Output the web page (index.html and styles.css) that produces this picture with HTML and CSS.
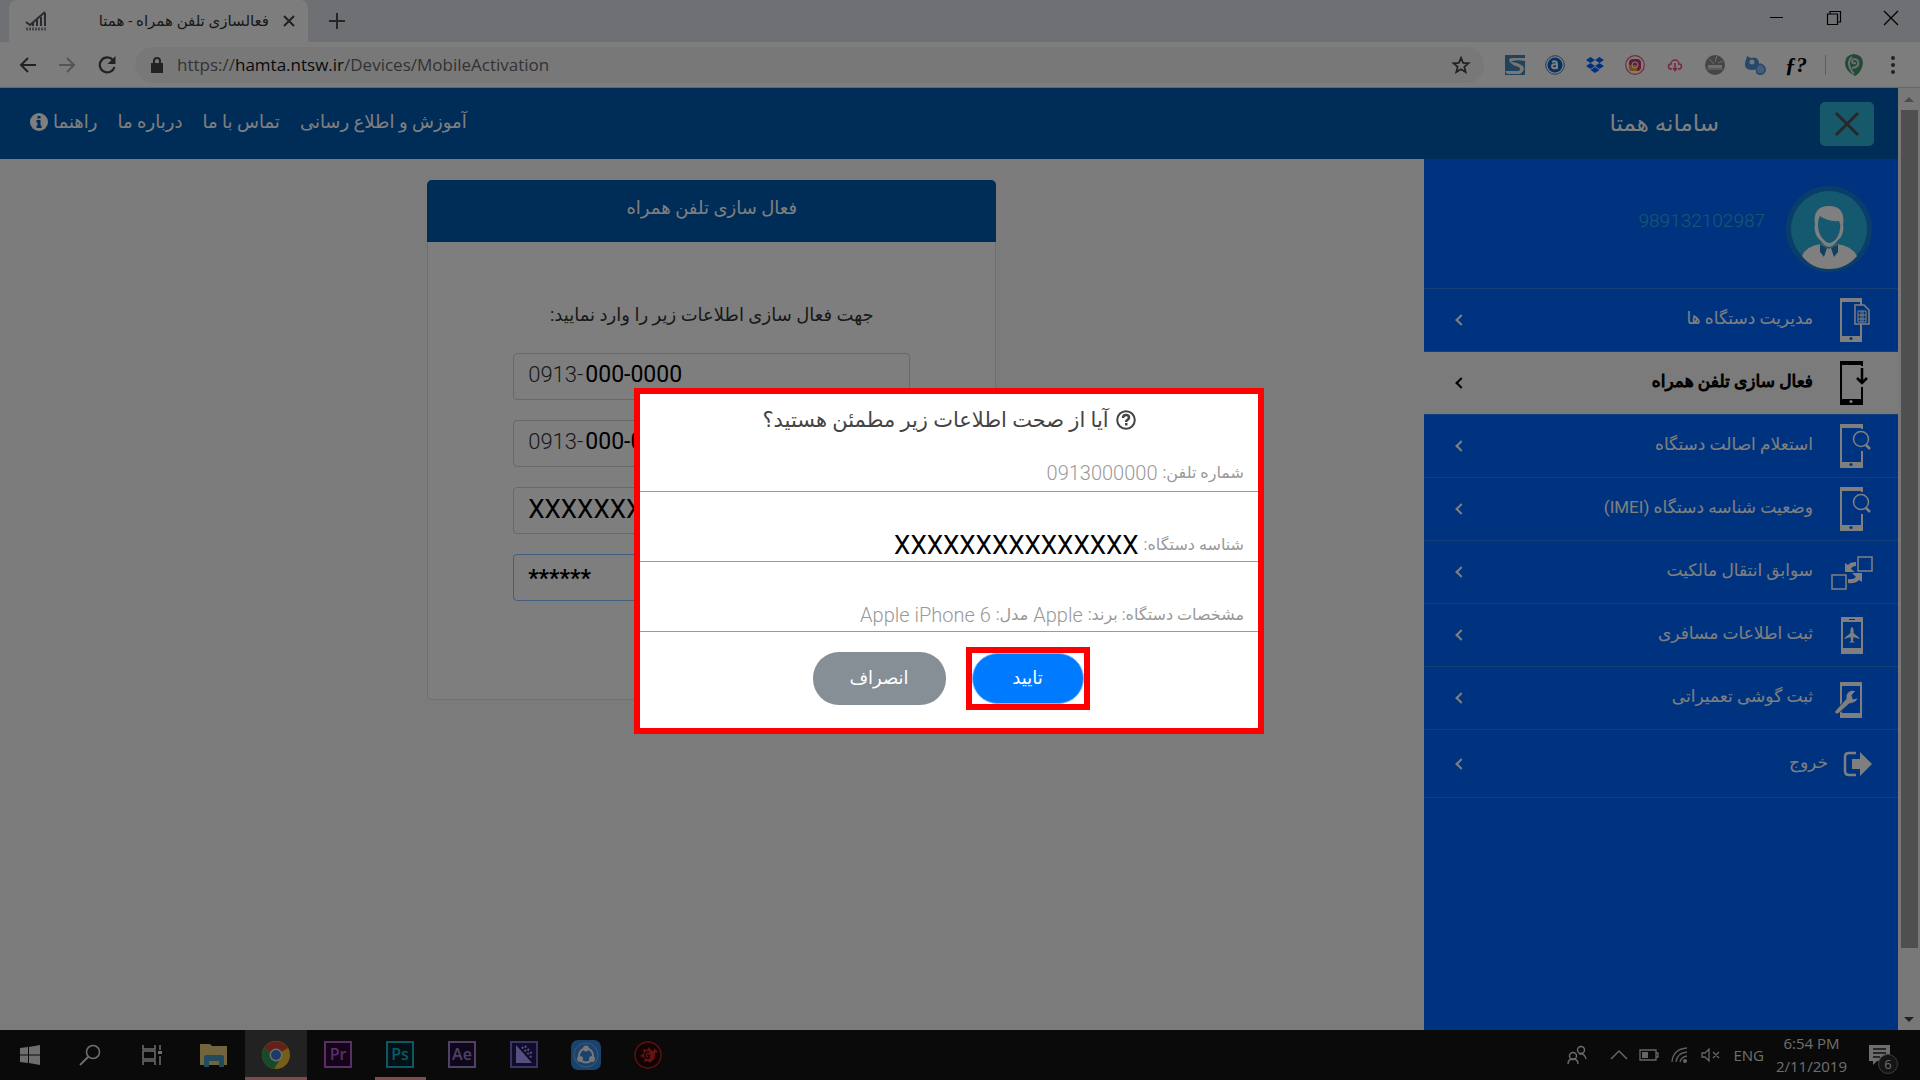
FILE: index.html
```html
<!DOCTYPE html>
<html lang="fa">
<head>
    <meta charset="UTF-8">
    <meta name="viewport" content="width=device-width, initial-scale=1.0">
    <title>فعالسازی تلفن همراه - همتا</title>
    <link rel="stylesheet" href="styles.css">
</head>
<body>
    <!-- Browser tabs -->
    <div class="tab-strip">
        <div class="tab">
            <svg class="tab-logo" width="22" height="20" viewBox="0 0 22 20"><path d="M1 11l4 3L20 1M8 12v3M12 9v6M16 6v9M20 2v13" fill="none" stroke="#556" stroke-width="2"/><path d="M1 18h20" stroke="#889" stroke-width="3" stroke-dasharray="2 1"/></svg>
            <span class="tab-title" dir="rtl">فعالسازی تلفن همراه - همتا</span>
            <button class="icon-btn" aria-label="Close tab"><svg width="12" height="12" viewBox="0 0 12 12"><path d="M1 1l10 10M11 1L1 11" stroke="#444" stroke-width="2"/></svg></button>
        </div>
        <button class="icon-btn" aria-label="New tab"><svg width="16" height="16" viewBox="0 0 16 16"><path d="M8 0v16M0 8h16" stroke="#4a4d51" stroke-width="2"/></svg></button>
        <div class="window-controls">
            <button class="icon-btn" aria-label="Minimize"><svg width="14" height="14" viewBox="0 0 14 14"><path d="M0 6.500h13" stroke="#000"/></svg></button>
            <button class="icon-btn" aria-label="Restore"><svg width="14" height="14" viewBox="0 0 14 14"><path d="M.5 3h10v10.500h-10zM3 3V.5h10.500V11H11" fill="none" stroke="#000" stroke-width="1.200"/></svg></button>
            <button class="icon-btn" aria-label="Close"><svg width="14" height="14" viewBox="0 0 14 14"><path d="M0 0l14 14M14 0L0 14" stroke="#000" stroke-width="1.300"/></svg></button>
        </div>
    </div>

    <!-- Address bar -->
    <div class="toolbar">
        <div class="toolbar-nav">
            <button class="icon-btn" aria-label="Back"><svg width="18" height="16" viewBox="0 0 18 16"><path d="M17 8H2M9 1L2 8l7 7" fill="none" stroke="#444" stroke-width="2"/></svg></button>
            <button class="icon-btn" aria-label="Forward"><svg width="18" height="16" viewBox="0 0 18 16"><path d="M1 8h15M9 1l7 7-7 7" fill="none" stroke="#aaa" stroke-width="2"/></svg></button>
            <button class="icon-btn" aria-label="Reload"><svg width="20" height="20" viewBox="0 0 20 20"><path d="M16 5a7.500 7.500 0 1 0 1.500 7" fill="none" stroke="#444" stroke-width="2.200"/><path d="M18.500 1v8h-8z" fill="#444"/></svg></button>
        </div>
        <div class="address">
            <svg width="12" height="16" viewBox="0 0 12 16"><path d="M0 6h12v10H0z" fill="#444"/><path d="M3 7V4a3 3 0 0 1 6 0v3" fill="none" stroke="#444" stroke-width="2"/></svg>
            <div class="url">https://<b>hamta.ntsw.ir</b>/Devices/MobileActivation</div>
            <button class="icon-btn" aria-label="Bookmark"><svg width="18" height="18" viewBox="0 0 20 20"><path d="M10 2l2.300 5.600 6 .5-4.600 3.900 1.500 5.900L10 14.700l-5.200 3.200 1.500-5.900-4.600-3.900 6-.5z" fill="none" stroke="#444" stroke-width="2"/></svg></button>
        </div>
        <div class="extensions">
            <svg width="20" height="20" viewBox="0 0 20 20"><path d="M0 0h20v20H0z" fill="#4085b5"/><path d="M20 3H8Q2 3 5 7t9 5q3 4-2 4H0l2 3h13q6-4 3-8-6-4-12-4 3-3 14-1z" fill="#eee"/></svg>
            <svg width="20" height="20" viewBox="0 0 20 20"><circle cx="10" cy="10" r="9.300" fill="none" stroke="#3a78c8"/><circle cx="10" cy="10" r="7.500" fill="#1463b8"/><path d="M7 7q5-2 5 2v5M12 9.500q-5-1-5 2t5 1" fill="none" stroke="#fff" stroke-width="2"/></svg>
            <svg width="20" height="20" viewBox="0 0 20 20"><path d="M5.500 2L10 5 5.500 8 1 5zM14.500 2L19 5l-4.500 3L10 5zM5.500 8l4.500 3-4.500 3L1 11zM14.500 8l4.500 3-4.500 3-4.500-3zM10 12l4.500 3-4.500 3-4.500-3z" fill="#0061fe"/></svg>
            <svg width="20" height="20" viewBox="0 0 20 20"><circle cx="10" cy="10" r="9.300" fill="none" stroke="#e85468" stroke-width="1.200"/><rect x="4" y="4" width="12" height="12" rx="4" fill="#c53678"/><path d="M4 10h8v6H8q-4 0-4-4z" fill="#f59e26"/><circle cx="10" cy="10" r="3" fill="none" stroke="#fff"/></svg>
            <svg width="20" height="20" viewBox="0 0 20 20"><path d="M7 14H6a2.500 2.500 0 0 1 0-5 4 4 0 0 1 8 0 2.500 2.500 0 0 1 0 5H13M10 8v7M8 13l2 2.500 2-2.500" fill="none" stroke="#ee4f78" stroke-width="1.500"/></svg>
            <svg width="20" height="20" viewBox="0 0 20 20"><circle cx="10" cy="10" r="10" fill="#8a8a8a"/><path d="M4 4l5 5M12 1l-2 6M18 6l-5 2M2 14h16" stroke="#ddd"/><path d="M3 10h14v3H3z" fill="#ddd"/></svg>
            <svg width="20" height="20" viewBox="0 0 20 20"><path d="M2 1l4 2q7-2 8 5t-7 7-7-7z" fill="#4a90d9"/><circle cx="7" cy="7" r="2.500" fill="#eee"/><path d="M11 12l4-3q6 2 5 7-3 5-8 2z" fill="#8fbbe8" stroke="#4a90d9" stroke-width="1.500"/></svg>
            <span class="font-ext">ƒ?</span>
            <span class="divider"></span>
            <svg class="profile-ext" width="20" height="22" viewBox="0 0 20 22"><path d="M10 0q9 1 9 9-1 9-8 13Q1 17 1 9q0-8 9-9z" fill="#40966b"/><path d="M8 3Q1 9 10 20M8 14q8-1 6-7-4-4-6 0 0 3 4 2" fill="none" stroke="#ddd" stroke-width="2"/></svg>
            <button class="icon-btn" aria-label="Menu"><svg width="6" height="18" viewBox="0 0 6 18"><circle cx="3" cy="2" r="2" fill="#444"/><circle cx="3" cy="9" r="2" fill="#444"/><circle cx="3" cy="16" r="2" fill="#444"/></svg></button>
        </div>
    </div>

    <div class="viewport">
        <div class="page" dir="rtl">
            <header class="site-header">
                <button class="menu-toggle" aria-label="بستن منو"><svg width="24" height="24" viewBox="0 0 24 24"><path d="M1 1l22 22M23 1L1 23" stroke="#574c50" stroke-width="3"/></svg></button>
                <h1 class="site-title">سامانه همتا</h1>
                <nav class="top-nav">
                    <a href="#">آموزش و اطلاع رسانی</a>
                    <a href="#">تماس با ما</a>
                    <a href="#">درباره ما</a>
                    <a href="#" class="help">راهنما
                        <svg width="18" height="18" viewBox="0 0 18 18"><circle cx="9" cy="9" r="9" fill="#fff"/><path d="M7.500 3h3v2.500h-3zM6.500 7h4v5.500h1V15h-5v-2.500h1v-3h-1z" fill="#0058b0"/></svg>
                    </a>
                </nav>
            </header>

            <div class="page-body">
                <aside class="sidebar">
                    <div class="profile">
                        <svg width="86" height="86" viewBox="0 0 86 86"><circle cx="43" cy="43" r="43" fill="#127dd4"/><circle cx="43" cy="43" r="38" fill="#2bb3e0"/><path d="M29 40q-3-20 14-20t14 20q1 0 0 5-1 6-5 9-5 7-9 7t-9-7q-4-3-5-9-1-5 0-5z" fill="#fff"/><path d="M32 39q0-6 2-9 8 6 19 5 2 3 1 8-1 8-6 12-5 4-9 0-7-6-7-16z" fill="#2bb3e0"/><path d="M16 70q4-10 19-12l8 5 8-5q15 2 20 12-11 13-28 13T16 70z" fill="#fff"/><path d="M34 58l7 4-3 9-4-5zM52 58l-7 4 3 9 4-5z" fill="#2085bd"/></svg>
                        <span class="profile-phone">989132102987</span>
                    </div>
                    <nav class="side-nav">
                        <a href="#" class="side-item">
                            <svg class="item-icon" width="40" height="46" viewBox="0 0 40 46"><path d="M6 2h20v42H6z" fill="none" stroke="currentColor" stroke-width="2"/><path d="M6 1h20v4H5V3zM5 39h22v5H5z" fill="currentColor"/><circle cx="16" cy="41.500" r="1.500" fill="#0066ff"/><path d="M20 8h9l5 5v14H20z" fill="#0066ff" stroke="currentColor" stroke-width="1.500"/><path d="M23 14h8v11h-8zM26 14v11M28 14v11M23 18h8M23 22h8" fill="none" stroke="currentColor"/></svg>
                            <span class="item-text">مدیریت دستگاه ها</span><span class="chevron"></span>
                        </a>
                        <a href="#" class="side-item active">
                            <svg class="item-icon" width="40" height="46" viewBox="0 0 40 46"><path d="M27 6V2H6v42h21V27" fill="none" stroke="currentColor" stroke-width="2"/><path d="M5 1h23v4H5zM5 39h23v5H5z" fill="currentColor"/><circle cx="16" cy="41.500" r="1.500" fill="#fff"/><path d="M27 8v14M22 18l5 5 5-5" fill="none" stroke="currentColor" stroke-width="2.500"/></svg>
                            <span class="item-text">فعال سازی تلفن همراه</span><span class="chevron"></span>
                        </a>
                        <a href="#" class="side-item">
                            <svg class="item-icon" width="40" height="46" viewBox="0 0 40 46"><path d="M27 6V2H6v42h21V28" fill="none" stroke="currentColor" stroke-width="2"/><path d="M5 1h23v4H5zM5 39h23v5H5z" fill="currentColor"/><circle cx="16" cy="41.500" r="1.500" fill="#0066ff"/><circle cx="26" cy="16" r="7.500" fill="none" stroke="currentColor" stroke-width="1.500"/><path d="M31 22l4 4" stroke="currentColor" stroke-width="2.500"/></svg>
                            <span class="item-text">استعلام اصالت دستگاه</span><span class="chevron"></span>
                        </a>
                        <a href="#" class="side-item">
                            <svg class="item-icon" width="40" height="46" viewBox="0 0 40 46"><path d="M27 6V2H6v42h21V28" fill="none" stroke="currentColor" stroke-width="2"/><path d="M5 1h23v4H5zM5 39h23v5H5z" fill="currentColor"/><circle cx="16" cy="41.500" r="1.500" fill="#0066ff"/><circle cx="26" cy="16" r="7.500" fill="none" stroke="currentColor" stroke-width="1.500"/><path d="M31 22l4 4" stroke="currentColor" stroke-width="2.500"/></svg>
                            <span class="item-text">وضعیت شناسه دستگاه (IMEI)</span><span class="chevron"></span>
                        </a>
                        <a href="#" class="side-item">
                            <svg class="item-icon" width="40" height="46" viewBox="0 0 40 46"><path d="M23 8h14v14H23zM-3 26h14v14H-3z" fill="none" stroke="currentColor" stroke-width="1.500"/><path d="M21 13q-6 0-8 3l-3-2v9h10l-4-3q1-3 5-3zM13 34q7 1 11-3l3 2v-9H17l4 4q-3 3-8 2z" fill="currentColor"/></svg>
                            <span class="item-text">سوابق انتقال مالکیت</span><span class="chevron"></span>
                        </a>
                        <a href="#" class="side-item">
                            <svg class="item-icon" width="40" height="46" viewBox="0 0 40 46"><rect x="7" y="6" width="20" height="35" rx="1" fill="none" stroke="currentColor" stroke-width="2"/><path d="M6 5h22v5H6zM6 36h22v6H6z" fill="currentColor"/><path d="M14 7.500h6" stroke="#0066ff"/><path d="M17 15q2 1 1.500 6l6 5v1l-6-2-.5 4 2 1.500H14l2-1.500-.5-4-6 2v-1l6-5q-.5-5 1.500-6z" fill="currentColor"/></svg>
                            <span class="item-text">ثبت اطلاعات مسافری</span><span class="chevron"></span>
                        </a>
                        <a href="#" class="side-item">
                            <svg class="item-icon" width="40" height="46" viewBox="0 0 40 46"><path d="M6 8h20v34H6z" fill="none" stroke="currentColor" stroke-width="2"/><path d="M5 7h22v4H5zM5 38h22v4H5z" fill="currentColor"/><path d="M0 36l11-12q-1-7 6-9l4 1-4 4 1 4 4-1 1-4q1 7-5 9l-4 1L3 39q-4 0-3-3z" fill="currentColor" stroke="#0066ff" stroke-width="1"/></svg>
                            <span class="item-text">ثبت گوشی تعمیراتی</span><span class="chevron"></span>
                        </a>
                        <a href="#" class="side-item logout">
                            <svg width="28" height="26" viewBox="0 0 28 26"><path d="M12 2H5q-4 0-4 4v14q0 4 4 4h7" fill="none" stroke="currentColor" stroke-width="2.500"/><path d="M8 8h8V1l12 12-12 12v-7H8z" fill="currentColor"/></svg>
                            <span class="item-text">خروج</span><span class="chevron"></span>
                        </a>
                    </nav>
                </aside>

                <main class="content">
                    <form class="card">
                        <h2 class="card-header">فعال سازی تلفن همراه</h2>
                        <div class="card-body">
                            <p class="card-lead">جهت فعال سازی اطلاعات زیر را وارد نمایید:</p>
                            <label class="field" dir="ltr"><span class="prefix">0913-</span><input type="text" aria-label="شماره تلفن" value="000-0000"></label>
                            <label class="field" dir="ltr"><span class="prefix">0913-</span><input type="text" aria-label="تکرار شماره تلفن" value="000-0000"></label>
                            <label class="field" dir="ltr"><input type="text" class="imei" aria-label="شناسه دستگاه" value="XXXXXXXXXXXXXXX"></label>
                            <label class="field focused" dir="ltr"><input type="text" class="code" aria-label="کد" value="******"></label>
                        </div>
                    </form>
                </main>
            </div>
        </div>
        <div class="scrollbar">
            <span class="arrow up"></span>
            <span class="thumb"></span>
            <span class="arrow down"></span>
        </div>
    </div>

    <!-- Windows taskbar -->
    <footer class="taskbar">
        <div class="apps">
            <button class="app start" aria-label="Start"><svg width="20" height="20" viewBox="0 0 20 20"><path d="M0 3l8-1v7.500H0zM9 2l11-2v9.500H9zM0 10.500h8V18l-8-1zM9 10.500h11V20L9 18z" fill="#ddd"/></svg></button>
            <button class="app" aria-label="Search"><svg width="22" height="22" viewBox="0 0 22 22"><circle cx="14" cy="8" r="6.500" fill="none" stroke="#ddd" stroke-width="1.600"/><path d="M9 13l-8 8" stroke="#ddd" stroke-width="1.800"/></svg></button>
            <button class="app" aria-label="Task view"><svg width="20" height="20" viewBox="0 0 20 20"><path d="M1 0v4h12V0M1 20v-4h12v4M1 6h12v8H1zM18 0v5M18 11v9" fill="none" stroke="#ddd" stroke-width="1.500"/><path d="M16 6h4v3h-4z" fill="#ddd"/></svg></button>
            <button class="app" aria-label="Explorer"><svg width="28" height="24" viewBox="0 0 28 24"><path d="M0 1h10l2 2h15v19H0z" fill="#e5c878"/><path d="M4 24V14q0-2 2-2h16q2 0 2 2v10h-5v-6H9v6z" fill="#4497bb"/></svg></button>
            <button class="app current" aria-label="Chrome"><svg width="28" height="28" viewBox="0 0 28 28"><circle cx="14" cy="14" r="14" fill="#e8bf31"/><path d="M14 14L2 7a14 14 0 0 1 24 0z" fill="#c94334"/><path d="M14 14L2 7a14 14 0 0 0 10 21l7-11z" fill="#2e9555"/><circle cx="14" cy="14" r="6.500" fill="#ddd"/><circle cx="14" cy="14" r="5" fill="#3e75cf"/></svg></button>
            <button class="app"><span class="adobe pr">Pr</span></button>
            <button class="app"><span class="adobe ps">Ps</span></button>
            <button class="app"><span class="adobe ae">Ae</span></button>
            <button class="app" aria-label="Media Encoder"><span class="adobe me"><svg width="18" height="20" viewBox="0 0 18 20"><path d="M1 1l16 18H1z" fill="#aaa0ff"/><path d="M7 3l10 11M10 2l7 8" stroke="#aaa0ff" stroke-width="2" stroke-dasharray="2 2"/></svg></span></button>
            <button class="app" aria-label="SHAREit"><svg width="30" height="30" viewBox="0 0 30 30"><rect width="30" height="30" rx="7" fill="#3484d8"/><circle cx="15" cy="15" r="12" fill="none" stroke="#81b5ef"/><circle cx="15" cy="15.500" r="7" fill="none" stroke="#eee" stroke-width="2"/><circle cx="15" cy="8.500" r="3" fill="#eee"/><circle cx="9" cy="19" r="3" fill="#eee"/><circle cx="21" cy="19" r="3" fill="#eee"/></svg></button>
            <button class="app" aria-label="GOM"><svg width="28" height="28" viewBox="0 0 28 28"><circle cx="14" cy="14" r="13" fill="#220606" stroke="#b52222" stroke-width="1.500"/><path d="M20 7l4 4-3 1q1 6-3 8l-2 2-2-2-4 1 1-4-5-2 4-3-1-4 4 1 2-3 2 3 3 1z" fill="#c42727"/><path d="M15 11q-4-1-4 3t4 3v-3h-2" fill="none" stroke="#220606" stroke-width="1.500"/></svg></button>
        </div>
        <div class="tray">
            <svg class="people" width="20" height="20" viewBox="0 0 20 20"><circle cx="14" cy="5" r="3.500" fill="none" stroke="#ddd" stroke-width="1.400"/><circle cx="6" cy="11" r="3.500" fill="none" stroke="#ddd" stroke-width="1.400"/><path d="M1 19q0-5 5-5t5 5M12 9q6-1 7 5" fill="none" stroke="#ddd" stroke-width="1.400"/></svg>
            <svg width="16" height="10" viewBox="0 0 16 10"><path d="M0 9l8-8 8 8" fill="none" stroke="#ccc" stroke-width="1.500"/></svg>
            <svg width="20" height="12" viewBox="0 0 20 12"><path d="M1 1h16v10H1zM17 4h2v4h-2" fill="none" stroke="#ccc" stroke-width="1.300"/><path d="M3 3h6v6H3z" fill="#ccc"/></svg>
            <svg width="18" height="16" viewBox="0 0 18 16"><path d="M1 15Q2 2 16 1M5 15Q6 6 16 5M9 15Q10 10 16 9" fill="none" stroke="#bbb" stroke-width="1.300"/><circle cx="14" cy="14" r="2" fill="#ccc"/></svg>
            <svg width="20" height="14" viewBox="0 0 20 14"><path d="M1 5h3l4-4v12L4 9H1zM12 4l6 6M18 4l-6 6" fill="none" stroke="#ccc" stroke-width="1.300"/></svg>
            <span class="lang">ENG</span>
            <div class="clock"><span>6:54 PM</span><span>2/11/2019</span></div>
            <button class="notes" aria-label="Notifications"><svg width="21" height="20" viewBox="0 0 21 20"><path d="M0 0h21v16H8l-4 4v-4H0z" fill="#ddd"/><path d="M4 4h13M4 8h13M4 12h7" stroke="#222" stroke-width="1.300"/></svg><span class="badge">6</span></button>
        </div>
    </footer>

    <!-- Confirmation dialog -->
    <div class="overlay" dir="rtl">
        <div class="modal" role="dialog" aria-modal="true" aria-labelledby="modal-title">
            <h2 class="modal-title" id="modal-title">
                <svg width="20" height="20" viewBox="0 0 20 20"><circle cx="10" cy="10" r="8.800" fill="none" stroke="#444" stroke-width="2"/><path d="M7 8q0-3 3-3t3 2.500q0 1.500-1.500 2.300T10 12" fill="none" stroke="#444" stroke-width="2.500"/><path d="M9 13h2.500v2.500H9z" fill="#444"/></svg>
                آیا از صحت اطلاعات زیر مطمئن هستید؟
            </h2>
            <p class="modal-row">شماره تلفن: <span>0913000000</span></p>
            <p class="modal-row">شناسه دستگاه: <span class="imei">XXXXXXXXXXXXXXX</span></p>
            <p class="modal-row">مشخصات دستگاه: برند: <span>Apple</span> مدل: <span>Apple iPhone 6</span></p>
            <div class="modal-actions">
                <div class="highlight"><button class="btn btn-primary">تایید</button></div>
                <button class="btn btn-secondary">انصراف</button>
            </div>
        </div>
    </div>
</body>
</html>
```

FILE: styles.css
```css
* {
    box-sizing: border-box;
}
body {
    margin: 0;
    height: 100vh;
    display: flex;
    flex-direction: column;
    overflow: hidden;
    font-family: Roboto, "DejaVu Sans", sans-serif;
    font-size: 16px;
    background-color: #fff;
    color: #333;
}
svg {
    display: block;
    flex: none;
    overflow: visible;
}
a {
    color: inherit;
    text-decoration: none;
}
h1, h2, p {
    margin: 0;
    font-weight: 400;
}
button {
    font: inherit;
    border: none;
    padding: 0;
    background: none;
    cursor: pointer;
}
.icon-btn {
    display: flex;
    align-items: center;
    justify-content: center;
}

/* Browser */
.tab-strip {
    height: 42px;
    flex: none;
    display: flex;
    align-items: center;
    gap: 21px;
    padding-left: 9px;
    background-color: #dee1e6;
}
.tab {
    width: 299px;
    height: 42px;
    display: flex;
    align-items: center;
    gap: 14px;
    padding: 0 13px 0 16px;
    border-radius: 8px 8px 0 0;
    background-color: #fbfbfb;
}
.tab-title {
    flex: 1;
    font-size: 15px;
    white-space: nowrap;
}
.window-controls {
    margin-left: auto;
    margin-right: 22px;
    display: flex;
    gap: 43px;
}
.window-controls svg {
    margin-top: -6px;
}
.toolbar {
    height: 46px;
    flex: none;
    display: flex;
    align-items: center;
    padding: 0 24px 0 19px;
    background-color: #fbfbfb;
    border-bottom: 1px solid #ccc;
}
.toolbar-nav {
    display: flex;
    gap: 21px;
}
.address {
    flex: 1;
    height: 36px;
    display: flex;
    align-items: center;
    gap: 14px;
    margin-left: 18px;
    padding: 0 14px 0 16px;
    border-radius: 18px;
    background-color: #f1f1f2;
}
.url {
    flex: 1;
    font-family: "Open Sans", sans-serif;
    font-size: 17px;
    color: #666;
}
.url b {
    font-weight: 400;
    color: #111;
}
.extensions {
    display: flex;
    align-items: center;
    gap: 20px;
    margin-left: 21px;
}
.font-ext {
    width: 20px;
    font-family: "Liberation Serif", serif;
    font-size: 22px;
    font-style: italic;
    font-weight: 700;
    line-height: 24px;
    white-space: nowrap;
    color: #000;
}
.divider {
    width: 1px;
    height: 20px;
    background-color: #bbb;
}
.profile-ext {
    margin: 0 6px 0 -2px;
}
.viewport {
    flex: 1;
    min-height: 0;
    display: flex;
}
.page {
    flex: 1;
    display: flex;
    flex-direction: column;
    background-color: #f7f7f7;
}
.scrollbar {
    width: 22px;
    display: flex;
    flex-direction: column;
    align-items: center;
    background-color: #f1f1f1;
}
.arrow {
    width: 22px;
    height: 22px;
    display: flex;
    align-items: center;
    justify-content: center;
}
.arrow::after {
    content: "";
    border: 5px solid transparent;
}
.up::after {
    border-top: none;
    border-bottom-color: #999;
}
.down {
    margin-top: auto;
}
.down::after {
    border-bottom: none;
    border-top-color: #444;
}
.thumb {
    width: 17px;
    height: 89%;
    background-color: #9f9f9f;
}

/* Site header */
.site-header {
    height: 71px;
    flex: none;
    display: flex;
    align-items: center;
    padding: 0 24px 0 30px;
    background-color: #0058b0;
    color: #fff;
}
.menu-toggle {
    width: 54px;
    height: 44px;
    display: flex;
    align-items: center;
    justify-content: center;
    border-radius: 5px;
    background-color: #2bb3d6;
}
.site-title {
    margin-right: 101px;
    font-size: 23px;
}
.top-nav {
    display: flex;
    gap: 20px;
    margin-right: auto;
    padding-bottom: 4px;
    font-size: 18px;
}
.help {
    display: flex;
    align-items: center;
    gap: 5px;
}

/* Sidebar */
.page-body {
    flex: 1;
    min-height: 0;
    display: flex;
}
.sidebar {
    width: 25%;
    background-color: #0066ff;
    color: #fff;
}
.profile {
    height: 129px;
    display: flex;
    align-items: center;
    gap: 21px;
    padding: 10px 26px 0;
}
.profile-phone {
    padding-bottom: 16px;
    font-size: 19px;
    font-weight: 300;
    color: #2bb3e0;
}
.side-item {
    height: 63px;
    display: flex;
    align-items: center;
    gap: 22px;
    padding: 0 23px 0 33px;
    border-top: 1px solid #2a80ef;
}
.item-text {
    flex: 1;
    padding-bottom: 4px;
    font-size: 17px;
}
.chevron {
    width: 8px;
    height: 8px;
    border-left: 2px solid;
    border-bottom: 2px solid;
    transform: rotate(45deg);
}
.active {
    background-color: #f7f7f7;
    color: #000;
}
.active .item-text {
    -webkit-text-stroke: 1px #000;
}
.logout {
    height: 69px;
    gap: 16px;
    padding-right: 26px;
    border-bottom: 1px solid #2a80ef;
}

/* Card */
.content {
    flex: 1;
    padding-top: 21px;
}
.card {
    width: 40%;
    margin: 0 auto;
    border: 1px solid #dedede;
    border-radius: 5px;
    background-color: #fcfcfc;
}
.card-header {
    height: 62px;
    margin: -1px;
    padding-top: 16px;
    border-radius: 5px 5px 0 0;
    background-color: #0058b0;
    color: #fff;
    font-size: 18px;
    line-height: 24px;
    text-align: center;
}
.card-body {
    display: flex;
    flex-direction: column;
    align-items: center;
    gap: 20px;
    padding: 60px 0 98px;
}
.card-lead {
    margin-bottom: 4px;
    font-size: 18px;
    line-height: 28px;
}
.field {
    width: 70%;
    height: 47px;
    display: flex;
    align-items: center;
    padding: 0 14px 4px;
    border: 1px solid #d0d0d0;
    border-radius: 4px;
}
.prefix {
    margin-right: 2px;
    font-size: 22px;
    font-weight: 300;
}
.field input {
    flex: 1;
    min-width: 0;
    border: none;
    outline: none;
    padding: 0;
    background: none;
    font-family: Roboto, sans-serif;
    font-size: 23px;
    color: #000;
}
.field .imei {
    font-size: 26px;
}
.field .code {
    padding-top: 6px;
    font-weight: 700;
}
.focused {
    border-color: #80bdff;
}

/* Taskbar */
.taskbar {
    height: 50px;
    flex: none;
    display: flex;
    justify-content: space-between;
    background-color: #151515;
    color: #ddd;
    font-family: "Open Sans", sans-serif;
}
.apps {
    display: flex;
}
.app {
    width: 62px;
    display: flex;
    align-items: center;
    justify-content: center;
}
.start {
    width: 59px;
}
.current {
    background-color: #444;
    box-shadow: inset 0 -3px #f79a9d;
}
.app:has(.ps) {
    background: linear-gradient(#f79a9d, #f79a9d) center bottom / 51px 3px no-repeat;
}
.adobe {
    width: 28px;
    height: 27px;
    display: flex;
    align-items: center;
    justify-content: center;
    margin-bottom: 2px;
    border: 2px solid;
    font-size: 16px;
    font-weight: 600;
    line-height: 20px;
}
.pr {
    background-color: #2a0634;
    color: #b45fd0;
}
.ps {
    background-color: #06232c;
    color: #18b0c8;
}
.ae {
    background-color: #1c0d35;
    color: #a383cc;
}
.me {
    background-color: #1f1a55;
    color: #7468cf;
}
.tray {
    display: flex;
    align-items: center;
    gap: 12px;
    padding-right: 30px;
}
.people {
    margin-right: 12px;
}
.lang {
    font-size: 15px;
}
.clock {
    display: flex;
    flex-direction: column;
    align-items: center;
    font-size: 15px;
    line-height: 23px;
}
.notes {
    position: relative;
    margin-left: 10px;
}
.badge {
    position: absolute;
    left: 9px;
    top: 9px;
    width: 20px;
    height: 20px;
    border: 1px solid #777;
    border-radius: 50%;
    background-color: #2a2a2a;
    color: #ddd;
    font-size: 13px;
    line-height: 18px;
}

/* Dialog */
.overlay {
    position: fixed;
    inset: 0;
    display: flex;
    align-items: center;
    justify-content: center;
    padding: 42px 22px 0 0;
    background-color: rgba(0, 0, 0, 0.5);
}
.modal {
    width: 630px;
    border: 6px solid #f00;
    background-color: #fff;
    color: #999;
}
.modal-title {
    height: 56px;
    display: flex;
    align-items: center;
    justify-content: center;
    gap: 7px;
    padding-bottom: 4px;
    font-size: 21px;
    color: #444;
}
.modal-row {
    height: 70px;
    display: flex;
    align-items: flex-end;
    gap: 5px;
    padding: 0 14px 2px;
    border-bottom: 1px solid #999;
    font-size: 16px;
    line-height: 28px;
    white-space: nowrap;
}
.modal-title + .modal-row {
    height: 42px;
    padding-bottom: 4px;
}
.modal-row span {
    font-size: 20px;
    font-weight: 300;
}
.modal-row .imei {
    font-size: 26px;
    font-weight: 400;
    color: #000;
}
.modal-actions {
    display: flex;
    align-items: center;
    justify-content: center;
    gap: 20px;
    padding: 15px 0 18px 4px;
}
.highlight {
    border: 6px solid #f00;
    background-color: #fff;
}
.btn {
    min-width: 112px;
    height: 51px;
    display: block;
    padding-bottom: 3px;
    border-radius: 26px;
    color: #fff;
    font-size: 18px;
}
.btn-primary {
    background-color: #007bff;
    border: 1px solid #80bdff;
}
.btn-secondary {
    min-width: 133px;
    height: 53px;
    background-color: #868e96;
}
```
